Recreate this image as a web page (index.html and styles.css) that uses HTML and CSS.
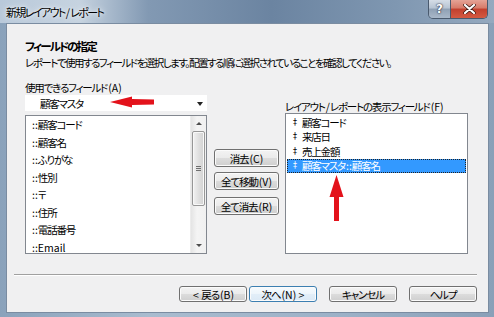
FILE: index.html
```html
<!DOCTYPE html>
<html lang="ja">
<head>
  <meta charset="UTF-8">
  <title>新規レイアウト/レポート</title>
  <link rel="stylesheet" href="styles.css">
</head>
<body>
  <div class="window">
    <div class="titlebar">
      <span class="title">新規レイアウト<span class="lat">/</span>レポート</span>
      <div class="caption-buttons">
        <span class="cap-btn cap-help">?</span>
        <span class="cap-btn cap-close">
          <svg width="13" height="10" viewBox="0 0 13 10"><path d="M2 1 L11 9 M11 1 L2 9" stroke="#3a1a14" stroke-width="3.6" stroke-linecap="round"/><path d="M2 1 L11 9 M11 1 L2 9" stroke="#fff" stroke-width="2.2" stroke-linecap="round"/></svg>
        </span>
      </div>
    </div>
    <div class="frame-body">
      <div class="client">
        <div class="head">
          <div class="heading">フィールドの指定</div>
          <div class="desc">レポートで使用するフィールドを選択します。配置する順に選択されていることを確認してください。</div>
        </div>

        <div class="fields">
          <div class="col col-left">
            <div class="field-label">使用できるフィールド<span class="lat">(A)</span></div>
            <div class="combo">
              <span class="combo-text">顧客マスタ</span>
              <span class="combo-arrow"></span>
            </div>
            <div class="listbox list-left">
              <ul class="items">
                <li><span class="lat">::</span>顧客コード</li>
                <li><span class="lat">::</span>顧客名</li>
                <li><span class="lat">::</span>ふりがな</li>
                <li><span class="lat">::</span>性別</li>
                <li><span class="lat">::</span>〒</li>
                <li><span class="lat">::</span>住所</li>
                <li><span class="lat">::</span>電話番号</li>
                <li><span class="lat">::Email</span></li>
              </ul>
              <div class="scrollbar">
                <span class="sb-btn sb-up"></span>
                <div class="sb-track">
                  <div class="sb-thumb"><span class="grip"></span></div>
                </div>
                <span class="sb-btn sb-down"></span>
              </div>
            </div>
          </div>

          <div class="col col-mid">
            <button class="btn btn-mid">消去<span class="lat">(C)</span></button>
            <button class="btn btn-mid">全て移動<span class="lat">(V)</span></button>
            <button class="btn btn-mid btn-gap">全て消去<span class="lat">(R)</span></button>
          </div>

          <div class="col col-right">
            <div class="field-label">レイアウト<span class="lat">/</span>レポートの表示フィールド<span class="lat">(F)</span></div>
            <div class="listbox list-right">
              <ul class="items">
                <li><span class="bullet">‡</span><span>顧客コード</span></li>
                <li><span class="bullet">‡</span><span>来店日</span></li>
                <li><span class="bullet">‡</span><span>売上金額</span></li>
                <li class="selected"><span class="bullet">‡</span><span>顧客マスタ<span class="lat">::</span>顧客名</span></li>
              </ul>
            </div>
          </div>
        </div>

        <div class="separator"></div>

        <div class="footer">
          <button class="btn btn-foot"><span class="lat">&lt; </span>戻る<span class="lat">(B)</span></button>
          <button class="btn btn-foot btn-default">次へ<span class="lat">(N) &gt;</span></button>
          <button class="btn btn-foot btn-spaced">キャンセル</button>
          <button class="btn btn-foot btn-spaced">ヘルプ</button>
        </div>
      </div>
    </div>

    <!-- red annotation arrows -->
    <svg class="arrow arrow-left" width="44" height="12" viewBox="0 0 44 12">
      <polygon points="0,6 22,0.5 22,3 44,3.5 44,8.5 22,9 22,11.5" fill="#e3121b"/>
    </svg>
    <svg class="arrow arrow-up" width="15" height="46" viewBox="0 0 15 46">
      <polygon points="7.5,0 14.5,22 10,22 10,46 5,46 5,22 0.5,22" fill="#e3121b"/>
    </svg>
  </div>
</body>
</html>
```

FILE: styles.css
```css
html, body {
  margin: 0;
  padding: 0;
  background: #ffffff;
}
body {
  font-family: "Noto Sans CJK JP", "Noto Sans", sans-serif;
  font-size: 10.5px;
  font-feature-settings: "palt";
  letter-spacing: -1.2px;
  color: #000;
}
/* latin bits (colons, access keys) keep normal spacing */
.lat {
  letter-spacing: 0;
  padding-left: 1px;
}
.window {
  position: relative;
  width: 494px;
  height: 317px;
  display: flex;
  flex-direction: column;
  background: linear-gradient(to right, #8aa2bb 0%, #a9bccf 30%, #9cb1c7 70%, #8aa0b8 100%);
  overflow: hidden;
}

/* title bar */
.titlebar {
  height: 23px;
  display: flex;
  align-items: flex-start;
  padding: 0 6px 0 6px;
  background: linear-gradient(to right, #b9c9da 0%, #c6d3e0 16%, #8299b3 30%, #6b84a1 55%, #7f97b1 80%, #95a9bf 100%);
}
.title {
  line-height: 23px;
  font-size: 11px;
  letter-spacing: -1.6px;
  padding-top: 1px;
  text-shadow: 0 0 6px #eef2f7, 0 0 3px #eef2f7;
}
.caption-buttons {
  margin-left: auto;
  display: flex;
  height: 18px;
  border: 1px solid #4a5a6e;
  border-top: none;
  border-radius: 0 0 5px 5px;
  overflow: hidden;
  letter-spacing: 0;
}
.cap-btn {
  display: flex;
  align-items: center;
  justify-content: center;
}
.cap-help {
  width: 21px;
  border-right: 1px solid #4a5a6e;
  background: linear-gradient(#d5dde7 0%, #b7c4d3 45%, #8fa0b4 50%, #a9b8c9 100%);
  color: #fff;
  font-family: "DejaVu Sans", sans-serif;
  font-weight: bold;
  font-size: 12px;
  text-shadow: 0 0 2px #223, 0 0 1px #223;
}
.cap-close {
  width: 36px;
  background: linear-gradient(#e5a396 0%, #d77a68 45%, #c2402e 50%, #d45a42 100%);
}

/* frame + client */
.frame-body {
  flex: 1;
  display: flex;
  padding: 0 5px 4px 6px;
}
.client {
  flex: 1;
  display: flex;
  flex-direction: column;
  background: #f0f0f1;
  border: 1px solid #7a8ca1;
}
.head {
  padding: 14px 0 0 18px;
}
.heading {
  font-weight: bold;
  font-size: 11.5px;
  letter-spacing: -1.9px;
  line-height: 16px;
}
.desc {
  margin-top: 1px;
  line-height: 16px;
  letter-spacing: -1.5px;
}

.fields {
  display: flex;
  align-items: flex-start;
  margin-top: 10px;
  padding-left: 18px;
}
.col {
  display: flex;
  flex-direction: column;
}
.col-left {
  width: 182px;
}
.field-label {
  line-height: 14px;
  white-space: nowrap;
}
.combo {
  height: 16px;
  display: flex;
  align-items: center;
  background: #fff;
  padding: 0 4px 0 15px;
}
.combo-text {
  flex: 1;
}
.combo-arrow {
  width: 0;
  height: 0;
  border-left: 3.5px solid transparent;
  border-right: 3.5px solid transparent;
  border-top: 4px solid #222;
  margin-top: 2px;
}
.listbox {
  background: #fff;
  border: 1px solid #82878f;
  display: flex;
  overflow: hidden;
}
.list-left {
  margin-top: 4px;
  height: 137px;
}
.items {
  list-style: none;
  margin: 0;
  padding: 0;
  flex: 1;
}
.list-left .items {
  padding: 0 0 0 5px;
}
.list-left .items li {
  line-height: 17.5px;
  height: 17.5px;
}

/* scrollbar */
.scrollbar {
  width: 15px;
  display: flex;
  flex-direction: column;
  background: linear-gradient(to right, #e4e4e4, #f4f4f4 40%, #f0f0f0);
  border-left: 1px solid #ececec;
}
.sb-btn {
  height: 15px;
  display: flex;
  align-items: center;
  justify-content: center;
}
.sb-up::before, .sb-down::before {
  content: "";
  width: 0;
  height: 0;
  border-left: 3px solid transparent;
  border-right: 3px solid transparent;
}
.sb-up::before {
  border-bottom: 3px solid #4d4d4d;
}
.sb-down::before {
  border-top: 3px solid #4d4d4d;
}
.sb-track {
  flex: 1;
  padding: 0 1px;
}
.sb-thumb {
  height: 73px;
  border: 1px solid #979797;
  border-radius: 2px;
  background: linear-gradient(to right, #f2f2f2, #e0e0e0 50%, #d2d2d2);
  box-shadow: inset 0 0 0 1px #f8f8f8;
  display: flex;
  align-items: center;
  justify-content: center;
}
.grip {
  width: 5px;
  height: 5px;
  background: repeating-linear-gradient(#6f6f6f 0 1px, transparent 1px 2px);
}

/* middle buttons */
.col-mid {
  width: 65px;
  margin-left: 7px;
  padding-top: 68px;
  gap: 5px;
}
.btn {
  font-family: inherit;
  font-feature-settings: "palt";
  font-size: 10.5px;
  letter-spacing: -1.1px;
  color: #000;
  border: 1px solid #707070;
  border-radius: 3px;
  background: linear-gradient(#f3f3f3 0%, #ebebeb 48%, #dcdcdc 52%, #cfcfcf 100%);
  box-shadow: inset 0 0 0 1px #fbfbfb;
  padding: 0;
  margin: 0;
  white-space: nowrap;
}
.btn-mid {
  height: 18px;
  line-height: 15px;
}
.btn-gap {
  margin-top: 2px;
}

/* right list */
.col-right {
  width: 183px;
  margin-left: 6px;
  padding-top: 20px;
}
.col-right .field-label {
  line-height: 12px;
}
.list-right {
  height: 139px;
}
.list-right .items {
  padding-top: 2px;
}
.list-right .items li {
  height: 14.3px;
  line-height: 14px;
  margin: 0 1px;
  display: flex;
  align-items: center;
}
.bullet {
  width: 9px;
  padding-left: 6px;
  font-family: "DejaVu Sans", sans-serif;
  font-size: 8px;
  line-height: 8px;
  letter-spacing: 0;
}
.list-right .items li.selected {
  background: #3399ff;
  color: #fff;
  outline: 1px dotted #222;
  outline-offset: -1px;
}

/* bottom */
.separator {
  margin: 20px 11px 0 7px;
  border-top: 1px solid #a0a0a0;
  border-bottom: 1px solid #ffffff;
}
.footer {
  display: flex;
  justify-content: flex-end;
  padding-right: 11px;
  margin-top: 10px;
}
.btn-foot {
  width: 68px;
  height: 16px;
  line-height: 13px;
  margin-left: 2px;
}
.btn-spaced {
  margin-left: 12px;
}
.btn-default {
  border-color: #3c7fb1;
  background: linear-gradient(#f7fbfe 0%, #edf5fb 48%, #e2eef8 52%, #dbe9f5 100%);
}

/* annotations */
.arrow {
  position: absolute;
}
.arrow-left {
  left: 110px;
  top: 96px;
}
.arrow-up {
  left: 329px;
  top: 175px;
}
```
